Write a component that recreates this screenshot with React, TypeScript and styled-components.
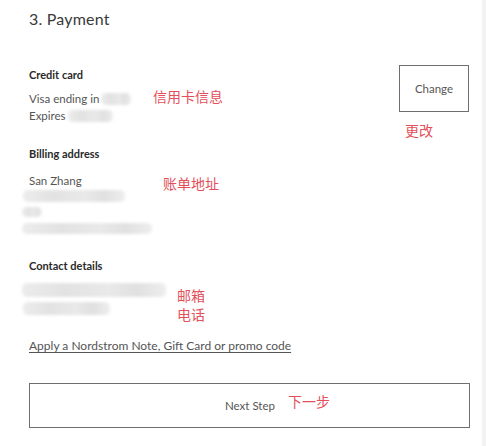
import React from "react";
import styled, { createGlobalStyle } from "styled-components";

const Global = createGlobalStyle`
  html, body { margin: 0; padding: 0; background: #ffffff; }
  body { font-family: Lato, "Noto Sans", "Noto Sans CJK SC", sans-serif; color: #333; }
`;

const Page = styled.div`
  width: 486px;
  height: 446px;
  box-sizing: border-box;
  border-right: 4px solid #f3f3f3;
  background: #fff;
  padding: 8px 0 0 29px;
  overflow: hidden;
`;

const Title = styled.h2`
  margin: 0;
  font-size: 16px;
  line-height: 22px;
  font-weight: 400;
  color: #3a3a3a;
  letter-spacing: 0.2px;
`;

const Section = styled.section<{ $top: number }>`
  display: flex;
  margin-top: ${(p) => p.$top}px;
`;

const Details = styled.div<{ $width: number }>`
  width: ${(p) => p.$width}px;
  flex: none;
  display: flex;
  flex-direction: column;
`;

const Heading = styled.div`
  font-size: 11px;
  font-weight: 700;
  line-height: 16px;
  color: #2a2a2a;
`;

const Line = styled.div`
  font-size: 11.5px;
  line-height: 17px;
  color: #555;
  display: flex;
  align-items: center;
  gap: 2px;
`;

const Blur = styled.span<{ $w: number; $h: number; $ml?: number; $mt?: number }>`
  display: block;
  width: ${(p) => p.$w}px;
  height: ${(p) => p.$h}px;
  margin-left: ${(p) => p.$ml ?? 0}px;
  margin-top: ${(p) => p.$mt ?? 0}px;
  background: linear-gradient(90deg, #ececec, #e2e2e2 30%, #e9e9e9 60%, #e0e0e0 80%, #eeeeee);
  border-radius: 5px;
  filter: blur(1.5px);
`;

const Note = styled.div<{ $top: number }>`
  margin-top: ${(p) => p.$top}px;
  font-family: "Noto Sans CJK SC", sans-serif;
  font-size: 14px;
  line-height: 19px;
  color: #e3505c;
`;

const Spacer = styled.div`
  flex: 1;
`;

const Aside = styled.div`
  width: 70px;
  margin-right: 13px;
  display: flex;
  flex-direction: column;
`;

const OutlineButton = styled.button`
  box-sizing: border-box;
  background: #fff;
  border: 1.5px solid #6f6f6f;
  font-family: Lato, "Noto Sans", sans-serif;
  font-size: 11.5px;
  color: #555;
  padding: 0;
  cursor: pointer;
`;

const ChangeButton = styled(OutlineButton)`
  width: 70px;
  height: 47px;
`;

const NextButton = styled(OutlineButton)`
  width: 441px;
  height: 45px;
  margin-top: 29px;
  display: flex;
  align-items: center;
  justify-content: center;
  gap: 13px;
  padding-left: 56px;
`;

const PromoLink = styled.a`
  display: block;
  margin-top: 14px;
  font-size: 12px;
  line-height: 16px;
  color: #555;
  text-decoration: underline;
  text-underline-offset: 2px;
`;

export default function App() {
  return (
    <>
      <Global />
      <Page>
        <Title>3. Payment</Title>

        <Section $top={35}>
          <Details $width={124}>
            <Heading style={{ marginTop: 2 }}>Credit card</Heading>
            <Line style={{ marginTop: 7 }}>
              Visa ending in <Blur $w={30} $h={12} />
            </Line>
            <Line>
              Expires <Blur $w={45} $h={12} />
            </Line>
          </Details>
          <Note $top={22}>信用卡信息</Note>
          <Spacer />
          <Aside>
            <ChangeButton>Change</ChangeButton>
            <Note $top={9} style={{ marginLeft: 6 }}>更改</Note>
          </Aside>
        </Section>

        <Section $top={6}>
          <Details $width={134}>
            <Heading>Billing address</Heading>
            <Line style={{ marginTop: 10 }}>San Zhang</Line>
            <Blur $w={102} $h={12} $ml={-6} $mt={1} />
            <Blur $w={20} $h={10} $ml={-7} $mt={5} />
            <Blur $w={130} $h={11} $ml={-7} $mt={6} />
          </Details>
          <Note $top={28}>账单地址</Note>
        </Section>

        <Section $top={24}>
          <Details $width={148}>
            <Heading>Contact details</Heading>
            <Blur $w={144} $h={14} $ml={-7} $mt={9} />
            <Blur $w={87} $h={13} $ml={-6} $mt={5} />
          </Details>
          <Note $top={28}>
            邮箱
            <br />
            电话
          </Note>
        </Section>

        <PromoLink href="#">Apply a Nordstrom Note, Gift Card or promo code</PromoLink>

        <NextButton>
          <span>Next Step</span>
          <Note $top={-9}>下一步</Note>
        </NextButton>
      </Page>
    </>
  );
}
